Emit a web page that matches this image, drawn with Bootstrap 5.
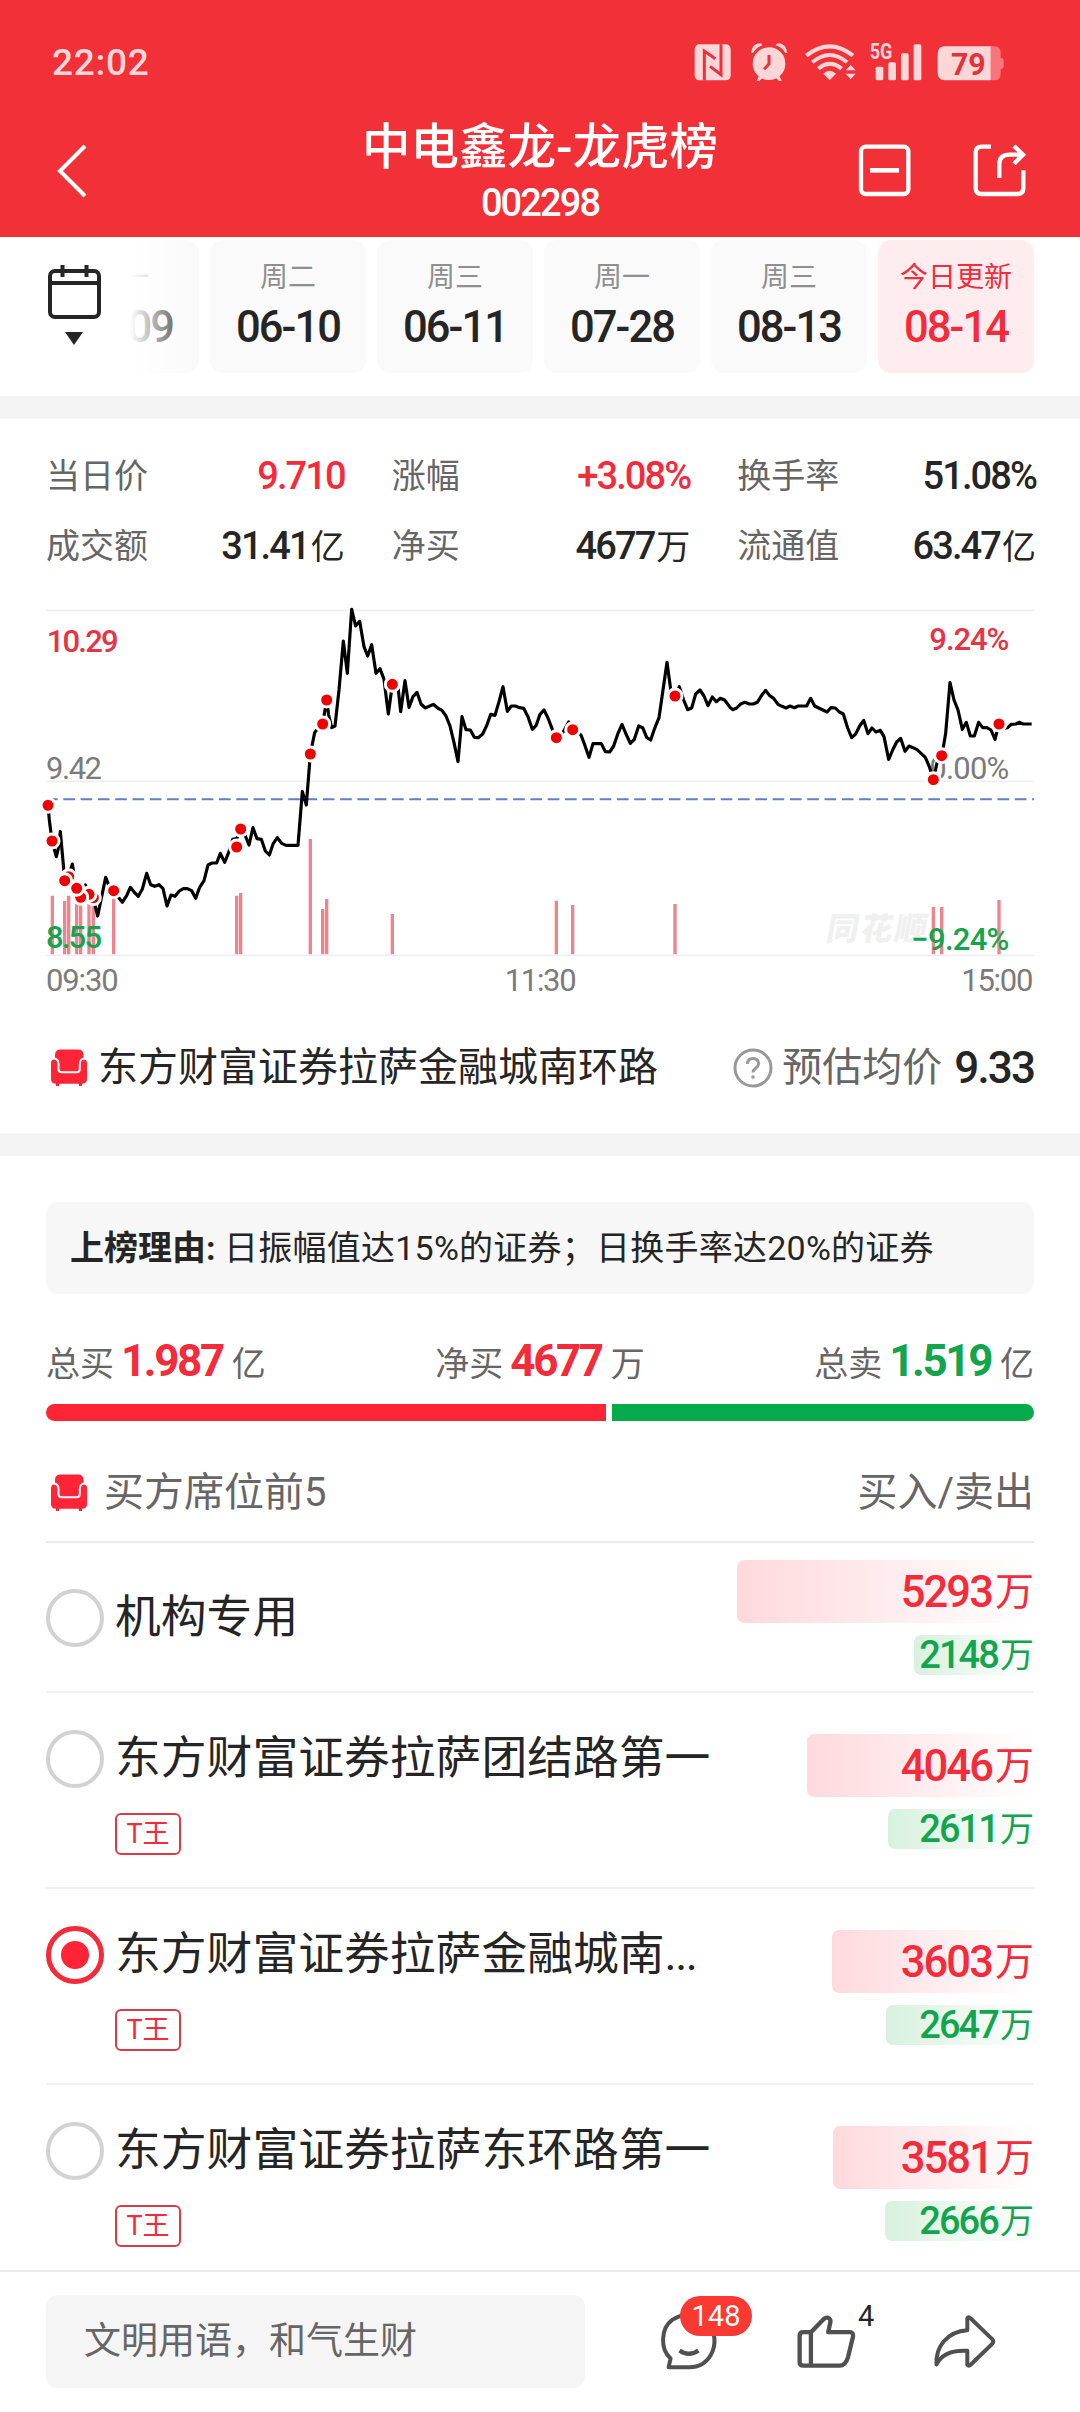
<!DOCTYPE html>
<html lang="zh-CN">
<head>
<meta charset="utf-8">
<meta name="viewport" content="width=device-width, initial-scale=1">
<title>中电鑫龙-龙虎榜</title>
<link href="https://cdn.jsdelivr.net/npm/bootstrap@5.3.0/dist/css/bootstrap.min.css" rel="stylesheet">
<style>
:root{--up:#f32b3b;--down:#12a54d;--ink:#252525;--sub:#666;}
html,body{width:1080px;height:2412px;overflow:hidden}
body{font-family:Roboto,"Noto Sans CJK SC",sans-serif;color:var(--ink);background:#fff;line-height:1;font-size:34px}
svg{display:block;flex:none;overflow:visible}
.up{color:var(--up)}.down{color:var(--down)}.sub{color:var(--sub)}
.num{font-weight:500;letter-spacing:-1.9px}
.topbar{background:#f23038;height:237px;flex:none}
.statusbar{height:106px;padding:18px 75px 0 52px;color:#fdd6d8}
.clock{font-size:37px;font-weight:500;letter-spacing:.7px}
.navrow{height:131px;padding:0 53px 0 58px}
.navside{width:215px}
.navside.end{width:220px;padding-top:38px}
.stock-name{font-size:48.5px;font-weight:500;line-height:54px;margin-top:15px}
.stock-code{font-size:38px;line-height:42px;letter-spacing:-1.9px;font-weight:500;margin-top:7px}
.datestrip{height:159px;padding:3px 0 0 46px;position:relative;overflow:hidden}
.calbtn{width:80px;height:133px;padding-top:25px}
.days{position:absolute;left:126px;top:3px;width:908px;justify-content:flex-end;overflow:hidden}
.day{width:156px;height:133px;border-radius:13px;background:#fafafa;flex:none;padding-top:23px}
.day .wk{font-size:28px;line-height:30px;color:#8f8f8f}
.day .dt{font-size:43.5px;line-height:46px;font-weight:500;letter-spacing:-1.9px;margin-top:12px}
.day.on{background:#ffecee}
.day.on .wk,.day.on .dt{color:var(--up)}
.fade-l{position:absolute;left:0;top:0;width:80px;height:133px;background:linear-gradient(90deg,#fff 5%,rgba(255,255,255,0) 90%)}
.band{height:23px;background:#f4f4f4;flex:none}
.stats{height:171px;padding:22px 44px 0 46px}
.stats .line{height:70px;column-gap:47px}
.stats .cell{width:299px}
.stats .num{font-size:38px}
.stats .u{font-size:34px;font-weight:400;letter-spacing:0;margin-left:2px}
.chartbox{height:420px}
.chartbox text{font-weight:500;font-size:93px}
.estimate{height:123px;padding:0 46px 8px 46px;font-size:40px}
.estimate .num{font-size:44px}
.reason{margin:46px 46px 0;height:92px;border-radius:12px;background:#f7f7f7;padding:0 24px;font-size:34px}
.reason .why{letter-spacing:.24px}
.totals{height:110px;padding:45px 46px 0}
.totals .num{font-size:44px;font-weight:700;letter-spacing:-2.4px;margin:0 9px 0 7px}
.splitbar{height:17px;margin:0 46px;gap:6px}
.splitbar div{height:17px}
.buyshare{background:#ff2436;border-radius:9px 0 0 9px}
.sellshare{background:#07aa4b;border-radius:0 9px 9px 0}
.listhead{height:122px;margin:0 46px;padding-top:24px;font-size:40px;border-bottom:2px solid #ebebeb}
.seat{margin:0 46px;height:196px;border-bottom:2px solid #f0f0f0;padding-top:37px}
.radio{width:58px;height:58px;border-radius:50%;border:4px solid #d2d2d2;flex:none}
.radio.on{border:5px solid var(--up);padding:10px}
.radio.on:after{content:"";display:block;width:28px;height:28px;border-radius:50%;background:#ff2436}
.seatname{font-size:45.8px;line-height:58px;margin-left:11px;white-space:nowrap}
.dots{letter-spacing:-1.5px}
.tagt{margin-left:11px;margin-top:25px;width:66px;height:42px;border:2px solid #d93d4a;border-radius:6px;color:var(--up);font-size:27px}
.amounts{margin-left:auto;margin-top:4px}
.seat.short{height:150px;padding-top:46px}
.seat.short .amounts{margin-top:-29px}
.amt{white-space:nowrap;border-radius:7px 0 0 7px}
.amt.buy{height:63px;background:linear-gradient(90deg,#ffd9dd,#fff);font-size:43.5px;padding-top:2px}
.amt.buy span{font-size:39px;font-weight:400;letter-spacing:0;margin-left:3px}
.amt.sell{height:40px;margin-top:12px;background:linear-gradient(90deg,#d8f1df,#fff);font-size:38px}
.amt.sell span{font-size:34px;font-weight:400;letter-spacing:0;margin-left:2px}
.listwrap{height:727px;overflow:hidden}
.commentbar{height:143px;border-top:2px solid #ebebeb;background:#fff;padding:23px 80px 0 46px}
.say{width:539px;height:93px;border-radius:12px;background:#f5f5f5;padding-left:38px;font-size:37px;color:#666}
.act{position:relative;margin-top:15px}
.pill{position:absolute;left:23px;top:-14px;width:72px;height:40px;border-radius:20px;background:#fa3a32;color:#fff;font-size:29px}
.likes{position:absolute;left:65px;top:-8px;font-size:29px}
</style>
</head>
<body>
<div class="d-flex flex-column">
<header class="topbar text-white">
  <div class="statusbar d-flex align-items-center justify-content-between">
    <span class="clock">22:02</span>
    <svg width="312" height="40" viewBox="100 65 936 120" fill="#fdd6d8">
      <rect x="105" y="72" width="108" height="108" rx="14"/>
      <path d="M134 180V92L167 115M184 72V163L151 138" fill="none" stroke="#f23038" stroke-width="9"/>
      <circle cx="328" cy="130" r="49"/><path d="M274 97Q277 69 304 69L308 75Q290 81 280 98ZM383 97Q379 69 353 69L348 75Q368 81 377 98ZM298 166L291 182H299L309 172ZM359 166L366 182H358L348 172Z"/>
      <path d="M328 104V131L313 147" fill="none" stroke="#f23038" stroke-width="9"/>
      <g fill="none" stroke="#fdd6d8" stroke-width="12"><path d="M440 106Q510 50 580 106M458 126Q510 82 562 126M476 145Q510 116 546 145"/></g>
      <path d="M491 160Q510 143 529 160L510 180ZM558 150L573 134L588 150ZM558 160L573 177L588 160Z"/>
      <text x="630" y="117" font-size="65" font-weight="700" textLength="68" lengthAdjust="spacingAndGlyphs">5G</text>
      <rect x="648" y="139" width="23" height="41" rx="5"/><rect x="686" y="126" width="23" height="54" rx="5"/><rect x="724" y="99" width="23" height="81" rx="5"/><rect x="762" y="72" width="23" height="108" rx="5"/>
      <path d="M992 78H1004Q1023 78 1023 98V112Q1032 112 1032 120V138Q1032 146 1023 146V160Q1023 180 1004 180H992Z" fill="#f8757b"/>
      <path d="M856 78H993V180H856Q834 180 834 158V100Q834 78 856 78Z"/>
      <text x="874" y="164" font-size="96" font-weight="700" fill="#e2323a" textLength="104" lengthAdjust="spacingAndGlyphs">79</text>
    </svg>
  </div>
  <nav class="navrow d-flex justify-content-between">
    <div class="navside pt-4"><svg width="30" height="54" viewBox="0 0 30 54" style="margin-top:14px"><path d="M27 2L2 27L27 52" fill="none" stroke="#fff" stroke-width="4"/></svg></div>
    <div class="text-center"><div class="stock-name">中电鑫龙-龙虎榜</div><div class="stock-code">002298</div></div>
    <div class="navside end d-flex justify-content-end">
      <svg width="169" height="54" viewBox="594 372 507 162" fill="none" stroke="#fff" stroke-width="13">
        <rect x="603" y="380" width="142" height="142" rx="14"/><path d="M630 451H717" stroke-width="14"/>
        <path d="M993 380H965Q947 380 947 398V504Q947 522 965 522H1072Q1090 522 1090 504V451M1018 474V433Q1018 404 1048 404H1088M1062 378L1089 404L1062 431"/>
      </svg>
    </div>
  </nav>
</header>

<section class="datestrip">
  <div class="days d-flex text-center" style="gap:11px">
    <div class="day"><div class="wk">周一</div><div class="dt">06-09</div></div>
    <div class="day"><div class="wk">周二</div><div class="dt">06-10</div></div>
    <div class="day"><div class="wk">周三</div><div class="dt">06-11</div></div>
    <div class="day"><div class="wk">周一</div><div class="dt">07-28</div></div>
    <div class="day"><div class="wk">周三</div><div class="dt">08-13</div></div>
    <div class="day on"><div class="wk">今日更新</div><div class="dt">08-14</div></div>
    <div class="fade-l"></div>
  </div>
  <div class="calbtn"><svg width="56" height="82" viewBox="0 0 56 82" fill="none" stroke="#252525" stroke-width="4"><rect x="4" y="6" width="49" height="46" rx="5"/><path d="M4 18H53M16.500 0V12M40.500 0V12"/><path d="M19 67H37L28 80Z" fill="#252525" stroke="none"/></svg></div>
</section>
<div class="band"></div>

<section class="stats">
  <div class="line d-flex align-items-center">
    <div class="cell d-flex justify-content-between align-items-center"><span class="sub">当日价</span><span class="num up">9.710</span></div>
    <div class="cell d-flex justify-content-between align-items-center"><span class="sub">涨幅</span><span class="num up">+3.08%</span></div>
    <div class="cell d-flex justify-content-between align-items-center"><span class="sub">换手率</span><span class="num">51.08%</span></div>
  </div>
  <div class="line d-flex align-items-center">
    <div class="cell d-flex justify-content-between align-items-center"><span class="sub">成交额</span><span class="num">31.41<span class="u">亿</span></span></div>
    <div class="cell d-flex justify-content-between align-items-center"><span class="sub">净买</span><span class="num">4677<span class="u">万</span></span></div>
    <div class="cell d-flex justify-content-between align-items-center"><span class="sub">流通值</span><span class="num">63.47<span class="u">亿</span></span></div>
  </div>
</section>

<section class="chartbox">
<svg width="1080" height="420" viewBox="-90 0 3240 1260">
  <g stroke="#efefef" stroke-width="5"><path d="M48 61H3012M48 574H3012M48 1096H3012"/></g>
  <path d="M48 628H3012" stroke="#5b82c9" stroke-width="6" stroke-dasharray="35 16.900"/>
  <text x="2386" y="1050" textLength="300" style="font-weight:900;font-size:96px" fill="#f0f0f0" transform="translate(185 0) skewX(-10)">同花顺</text>
  <path stroke="#ee858e" stroke-width="10" d="M67 1093V917M104 1093V933M116 1093V917M140 1093V930M152 1093V930M177 1093V930M190 1093V920M251 1093V915M620 1093V917M632 1093V909M841 1093V747M878 1093V957M890 1093V927M1087 1093V972M1579 1093V932M1628 1093V945M1935 1093V942M2710 1093V951M2735 1093V951M2907 1093V930"/>
  <g>
    <text x="50" y="187" fill="#e63345" textLength="216">10.29</text>
    <text x="48" y="566" fill="#7b7b7b" textLength="168" style="font-weight:400">9.42</text>
    <text x="48" y="1073" fill="#12a54d" textLength="168">8.55</text>
    <text x="2698" y="179" fill="#e63345" textLength="240">9.24%</text>
    <text x="2698" y="566" fill="#7b7b7b" textLength="240" style="font-weight:400">0.00%</text>
    <text x="2644" y="1081" fill="#12a54d" textLength="294">−9.24%</text>
    <text x="48" y="1204" fill="#7b7b7b" textLength="218" style="font-weight:400">09:30</text>
    <text x="1424" y="1204" fill="#7b7b7b" textLength="216" style="font-weight:400">11:30</text>
    <text x="2794" y="1204" fill="#7b7b7b" textLength="216" style="font-weight:400">15:00</text>
  </g>
  <polyline fill="none" stroke="#000" stroke-width="9.500" stroke-linejoin="round" points="54,646 58,690 66,753 79,800 85,775 91,725 101,835 104,872 116,858 127,822 135,870 140,896 152,925 166,885 177,913 190,925 203,978 215,920 227,862 240,895 251,903 264,920 277,937 290,917 301,892 313,907 325,919 337,897 350,850 362,884 374,889 387,884 399,896 411,948 423,915 435,919 448,903 460,896 472,896 485,902 497,925 509,892 522,872 534,825 546,819 560,819 571,790 584,817 597,785 608,748 620,746 632,717 645,735 657,765 669,713 681,746 694,748 706,783 718,795 730,760 742,743 755,760 768,766 804,766 817,605 829,645 841,492 854,428 866,412 878,402 890,330 896,375 905,413 915,408 927,300 940,153 952,250 965,58 977,108 989,94 1002,170 1013,198 1025,164 1038,250 1050,236 1062,268 1075,372 1087,283 1104,290 1112,365 1125,272 1137,352 1149,320 1161,307 1173,342 1186,354 1210,343 1223,354 1236,361 1248,378 1260,408 1272,458 1284,515 1296,380 1308,419 1321,420 1333,442 1345,443 1358,432 1370,407 1382,373 1395,376 1407,335 1419,290 1432,364 1444,348 1456,348 1469,353 1481,355 1494,380 1507,418 1518,407 1530,373 1542,360 1554,384 1567,418 1579,443 1591,440 1603,420 1616,396 1628,419 1640,425 1653,435 1665,467 1677,502 1689,461 1714,461 1726,485 1739,486 1751,468 1764,430 1776,403 1788,432 1801,460 1813,448 1826,408 1838,413 1850,442 1862,450 1874,415 1887,383 1899,300 1911,217 1923,305 1936,318 1948,290 1961,330 1973,359 1985,354 1997,312 2010,300 2022,318 2034,347 2047,321 2059,335 2071,325 2084,330 2100,352 2108,359 2120,354 2133,341 2145,337 2158,342 2170,342 2182,337 2195,316 2207,301 2219,317 2231,325 2244,343 2256,349 2268,354 2280,348 2293,353 2305,348 2330,348 2342,325 2354,348 2366,354 2391,366 2403,353 2416,354 2428,366 2440,372 2453,414 2465,443 2477,432 2489,408 2501,391 2514,431 2526,414 2538,426 2551,421 2562,440 2576,508 2588,480 2600,456 2612,445 2625,484 2637,468 2649,473 2661,479 2674,491 2686,502 2698,530 2710,568 2723,510 2736,496 2747,430 2760,278 2772,330 2784,360 2797,418 2809,397 2821,438 2833,438 2846,397 2858,413 2871,413 2883,420 2895,448 2907,402 2920,415 2932,413 2944,403 2958,402 2967,397 2980,402 3005,402"/>
  <g fill="#f00000" stroke="#fff" stroke-width="9">
    <circle cx="2907" cy="402" r="21"/><circle cx="2735" cy="497" r="21"/><circle cx="2710" cy="569" r="21"/><circle cx="1935" cy="318" r="21"/><circle cx="1628" cy="419" r="21"/><circle cx="1579" cy="443" r="21"/><circle cx="1087" cy="283" r="21"/><circle cx="890" cy="330" r="21"/><circle cx="878" cy="402" r="21"/><circle cx="841" cy="492" r="21"/><circle cx="632" cy="717" r="21"/><circle cx="620" cy="771" r="21"/><circle cx="251" cy="902" r="21"/><circle cx="190" cy="923" r="21"/><circle cx="177" cy="913" r="21"/><circle cx="152" cy="922" r="21"/><circle cx="140" cy="895" r="21"/><circle cx="116" cy="860" r="21"/><circle cx="104" cy="872" r="21"/><circle cx="66" cy="753" r="21"/><circle cx="54" cy="646" r="21"/>
  </g>
</svg>
</section>

<section class="estimate d-flex align-items-center">
  <svg width="46" height="40" viewBox="0 0 46 40" fill="#ff2436"><path d="M9 12V7Q9 1.500 14.500 1.500H32Q37.500 1.500 37.500 7V12L34 26H12Z"/><rect x="5" y="10.500" width="9" height="20" rx="4.500"/><rect x="32" y="10.500" width="9" height="20" rx="4.500"/><path d="M5 15V31Q5 35.700 10 35.700V38H13V35.700H33V38H36V35.700Q41 35.700 41 31V15L34 25H12Z"/><path d="M6 10.500Q12.500 10 12.500 16V21Q12.500 24.300 16 24.300H30.500Q33.800 24.300 33.800 21V16Q33.800 10 40 10.500" fill="none" stroke="#fff" stroke-width="2"/></svg>
  <span style="margin-left:6px">东方财富证券拉萨金融城南环路</span>
  <svg class="ms-auto" width="40" height="40" viewBox="0 0 40 40" fill="none" stroke="#999" stroke-width="3"><circle cx="20" cy="20" r="18"/><path d="M14.500 16Q14.500 10.500 20 10.500T25.500 16C25.500 20 20 20 20 24.500"/><circle cx="20" cy="29" r="1.800" fill="#999" stroke="none"/></svg>
  <span class="sub" style="margin-left:9px">预估均价</span><span class="num" style="margin-left:12px">9.33</span>
</section>
<div class="band"></div>

<section class="reason d-flex align-items-center"><span><b class="fw-bold">上榜理由: </b><span class="why">日振幅值达15%的证券；日换手率达20%的证券</span></span></section>

<section class="totals d-flex justify-content-between align-items-baseline sub">
  <span>总买<span class="num up">1.987</span>亿</span><span>净买<span class="num up">4677</span>万</span><span>总卖<span class="num down">1.519</span>亿</span>
</section>
<div class="splitbar d-flex"><div class="buyshare" style="width:560px"></div><div class="sellshare flex-fill"></div></div>

<div class="listhead d-flex align-items-center sub">
  <svg width="46" height="40" viewBox="0 0 46 40" fill="#ff2436"><path d="M9 12V7Q9 1.500 14.500 1.500H32Q37.500 1.500 37.500 7V12L34 26H12Z"/><rect x="5" y="10.500" width="9" height="20" rx="4.500"/><rect x="32" y="10.500" width="9" height="20" rx="4.500"/><path d="M5 15V31Q5 35.700 10 35.700V38H13V35.700H33V38H36V35.700Q41 35.700 41 31V15L34 25H12Z"/><path d="M6 10.500Q12.500 10 12.500 16V21Q12.500 24.300 16 24.300H30.500Q33.800 24.300 33.800 21V16Q33.800 10 40 10.500" fill="none" stroke="#fff" stroke-width="2"/></svg>
  <span style="margin-left:12px">买方席位前5</span><span class="ms-auto">买入/卖出</span>
</div>

<div class="listwrap">
  <div class="seat short d-flex align-items-start"><div class="radio"></div><div class="seatname">机构专用</div>
    <div class="amounts d-flex flex-column align-items-end"><div class="amt buy num up d-flex align-items-center justify-content-end" style="width:297px">5293<span>万</span></div><div class="amt sell num down d-flex align-items-center justify-content-end" style="width:120px">2148<span>万</span></div></div></div>
  <div class="seat d-flex align-items-start"><div class="radio"></div><div><div class="seatname">东方财富证券拉萨团结路第一</div><div class="tagt d-flex align-items-center justify-content-center">T王</div></div>
    <div class="amounts d-flex flex-column align-items-end"><div class="amt buy num up d-flex align-items-center justify-content-end" style="width:227px">4046<span>万</span></div><div class="amt sell num down d-flex align-items-center justify-content-end" style="width:146px">2611<span>万</span></div></div></div>
  <div class="seat d-flex align-items-start"><div class="radio on"></div><div><div class="seatname">东方财富证券拉萨金融城南<span class="dots">...</span></div><div class="tagt d-flex align-items-center justify-content-center">T王</div></div>
    <div class="amounts d-flex flex-column align-items-end"><div class="amt buy num up d-flex align-items-center justify-content-end" style="width:202px">3603<span>万</span></div><div class="amt sell num down d-flex align-items-center justify-content-end" style="width:148px">2647<span>万</span></div></div></div>
  <div class="seat d-flex align-items-start"><div class="radio"></div><div><div class="seatname">东方财富证券拉萨东环路第一</div><div class="tagt d-flex align-items-center justify-content-center">T王</div></div>
    <div class="amounts d-flex flex-column align-items-end"><div class="amt buy num up d-flex align-items-center justify-content-end" style="width:201px">3581<span>万</span></div><div class="amt sell num down d-flex align-items-center justify-content-end" style="width:149px">2666<span>万</span></div></div></div>
</div>

<footer class="commentbar d-flex align-items-start">
  <div class="say d-flex align-items-center">文明用语，和气生财</div>
  <div class="act" style="margin-left:72px"><svg width="63" height="63" viewBox="110 120 190 190" fill="none" stroke="#505050" stroke-width="12" stroke-linejoin="round"><path d="M145 293L151 266C118 236 122 175 156 150Q205 118 252 148C282 170 290 210 278 244Q258 293 207 293Z"/><path d="M178 242Q206 262 235 242" stroke-width="13"/></svg><span class="pill d-flex align-items-center justify-content-center">148</span></div>
  <div class="act" style="margin-left:73px"><svg width="67" height="63" viewBox="520 120 200 190" fill="none" stroke="#505050" stroke-width="13" stroke-linejoin="round"><path d="M573 187L612 147Q620 140 628 145Q634 150 631 160L625 187H690Q702 187 700 200L685 262Q677 288 660 288H550Q539 288 539 277V198Q539 187 550 187ZM573 187V288"/></svg><span class="likes">4</span></div>
  <div class="act ms-auto"><svg width="70" height="63" viewBox="930 120 210 190" fill="none" stroke="#505050" stroke-width="12" stroke-linejoin="round"><path d="M1042 145Q1045 138 1052 145L1117 208Q1124 215 1117 222L1052 285Q1045 291 1042 285V243C995 240 965 252 949 284C946 232 980 185 1042 181Z"/></svg></div>
</footer>
</div>
<script src="https://cdn.jsdelivr.net/npm/bootstrap@5.3.0/dist/js/bootstrap.bundle.min.js"></script>
</body>
</html>
